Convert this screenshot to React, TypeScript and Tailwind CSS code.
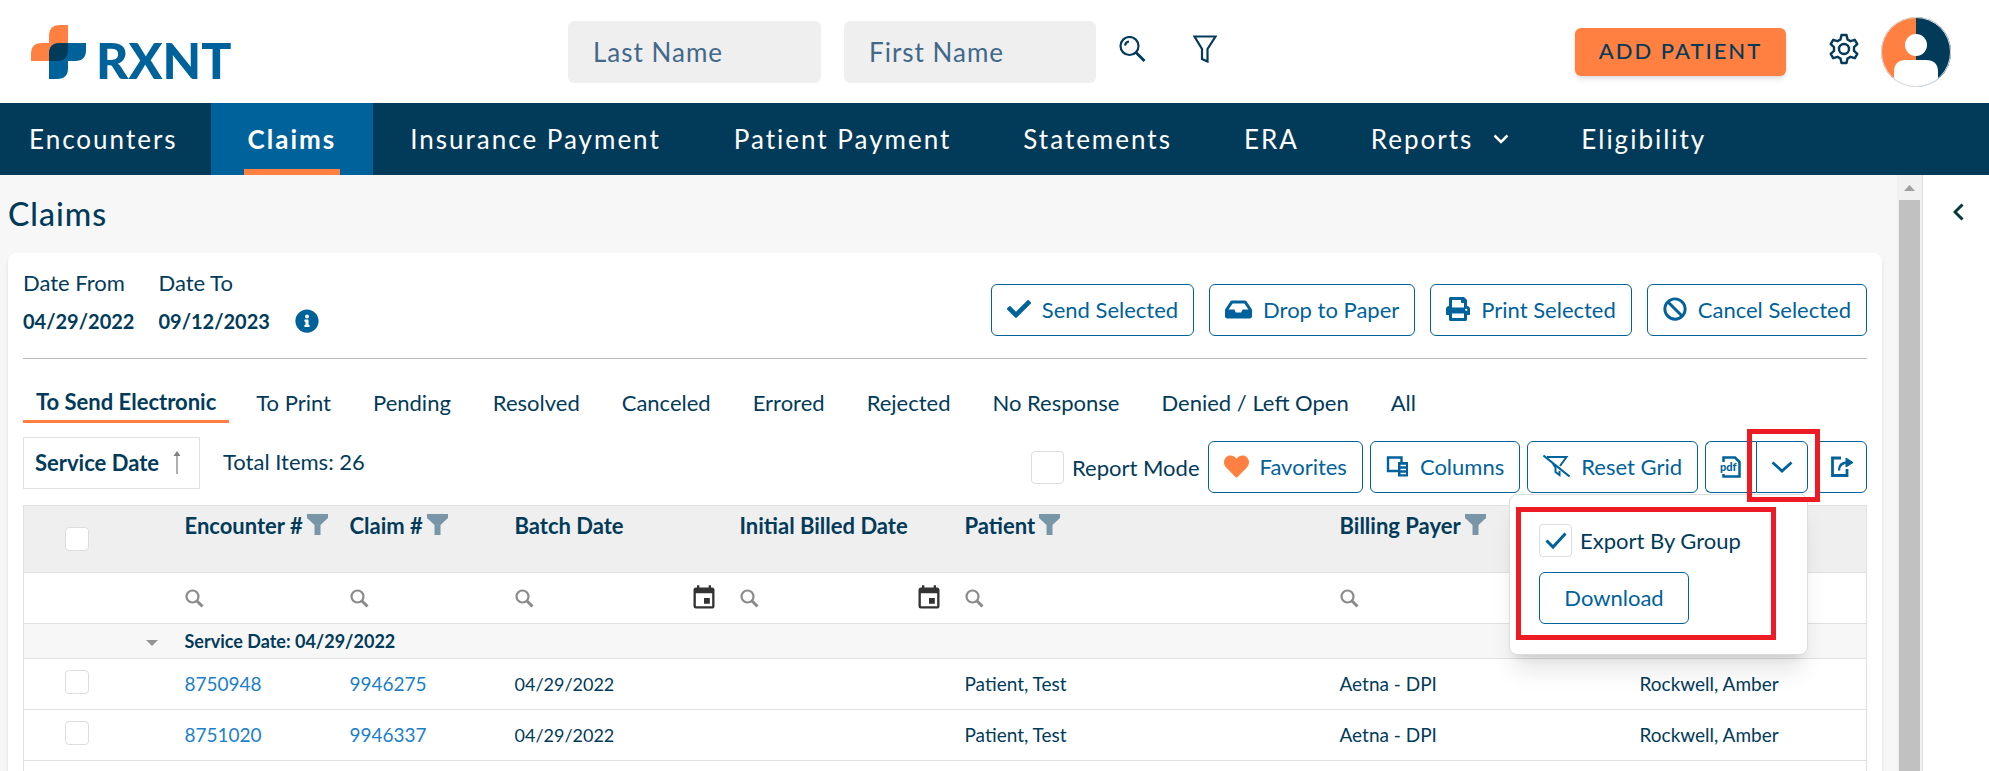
import type { ReactNode } from "react"
import { FaCheck, FaInbox, FaPrint, FaBan, FaHeart, FaInfoCircle } from "react-icons/fa"
import { MdEvent } from "react-icons/md"

type Claim = {
  encounter: string
  claim: string
  batchDate: string
  patient: string
  payer: string
  provider: string
}

const NAV = [
  "Encounters",
  "Claims",
  "Insurance Payment",
  "Patient Payment",
  "Statements",
  "ERA",
  "Reports",
  "Eligibility",
]

const TABS = [
  "To Send Electronic",
  "To Print",
  "Pending",
  "Resolved",
  "Canceled",
  "Errored",
  "Rejected",
  "No Response",
  "Denied / Left Open",
  "All",
]

const COLUMNS = [
  { label: "Encounter #", filter: true, date: false },
  { label: "Claim #", filter: true, date: false },
  { label: "Batch Date", filter: false, date: true },
  { label: "Initial Billed Date", filter: false, date: true },
  { label: "Patient", filter: true, date: false },
  { label: "Billing Payer", filter: true, date: false },
]

const CLAIMS: Claim[] = [
  {
    encounter: "8750948",
    claim: "9946275",
    batchDate: "04/29/2022",
    patient: "Patient, Test",
    payer: "Aetna - DPI",
    provider: "Rockwell, Amber",
  },
  {
    encounter: "8751020",
    claim: "9946337",
    batchDate: "04/29/2022",
    patient: "Patient, Test",
    payer: "Aetna - DPI",
    provider: "Rockwell, Amber",
  },
]

function Logo() {
  return (
    <a href="#home" aria-label="RXNT" className="flex items-end gap-[10px] text-[#00629b]">
      <svg width="55" height="54" viewBox="0 0 55 54">
        <path d="M18 18V11Q18 0 29 0H37V36H0V29Q0 18 11 18Z" fill="#ff8040" />
        <path d="M18 54V29Q18 18 29 18H55V25Q55 36 44 36H37V43Q37 54 26 54Z" fill="#00629b" />
        <path d="M18 36V29Q18 18 29 18H37V25Q37 36 26 36Z" fill="#023b5a" />
      </svg>
      <span className="text-[50px] leading-[38px] font-black">RXNT</span>
    </a>
  )
}

function Avatar() {
  return (
    <svg width="70" height="70" viewBox="0 0 70 70">
      <clipPath id="avatar">
        <circle cx="35" cy="35" r="35" />
      </clipPath>
      <g clipPath="url(#avatar)">
        <path d="M0 0H35V70H0Z" fill="#ff8040" />
        <path d="M35 0H70V70H35Z" fill="#023b5a" />
        <circle cx="35" cy="28" r="11" fill="#fff" />
        <path d="M13 70V55Q13 43 25 43H45Q57 43 57 55V70Z" fill="#fff" />
      </g>
      <circle cx="35" cy="35" r="34.5" fill="none" stroke="#d5dce1" strokeWidth="1" />
    </svg>
  )
}

function Gear() {
  return (
    <svg width="30" height="32" viewBox="0 0 30 32" fill="none" stroke="#023b5a" strokeWidth="2.4" strokeLinejoin="round">
      <path d="M12.5 2h5l1 4.4 3 1.8 4.3-1.4 2.5 4.3-3.3 3v3.8l3.3 3-2.5 4.3-4.3-1.4-3 1.8-1 4.4h-5l-1-4.4-3-1.8-4.3 1.4-2.5-4.3 3.3-3v-3.8l-3.3-3 2.5-4.3 4.3 1.4 3-1.8z" />
      <circle cx="15" cy="16" r="5" />
    </svg>
  )
}

function SearchGlass() {
  return (
    <svg width="27" height="27" viewBox="0 0 27 27" fill="none" stroke="#023b5a" strokeWidth="2.2">
      <circle cx="10.5" cy="10" r="9" />
      <path d="M6 9.5Q6.5 6 10 5.5" />
      <path d="M17 16.5L25.5 25" strokeWidth="2.8" />
    </svg>
  )
}

function FunnelOutline() {
  return (
    <svg width="24" height="28" viewBox="0 0 24 28" fill="none" stroke="#023b5a" strokeWidth="2.2">
      <path d="M1.5 1.5H22.5L14.5 14V26.5L9 24V14Z" />
    </svg>
  )
}

function HeaderFunnel() {
  return (
    <svg width="21" height="21" viewBox="0 0 21 21" fill="#7896a8">
      <path d="M0 0H21V4L13.5 11V21H7.5V11L0 4Z" />
    </svg>
  )
}

function CellSearch() {
  return (
    <svg width="19" height="19" viewBox="0 0 19 19" fill="none" stroke="#8a8a8a">
      <circle cx="7.5" cy="7.5" r="6" strokeWidth="2.2" />
      <path d="M11.5 11.5L17.5 17.5" strokeWidth="3" />
    </svg>
  )
}

function ColumnsIcon() {
  return (
    <svg width="23" height="21" viewBox="0 0 23 21" fill="none" stroke="#00629b">
      <path d="M12 15H2V1.5H15.5V7" strokeWidth="2.4" />
      <path d="M12 6H22V20.5H12Z" fill="#00629b" stroke="none" />
      <path d="M14.5 9.5H20M14.5 13.5H20M14.5 17.5H20" stroke="#fff" strokeWidth="1.5" />
    </svg>
  )
}

function ResetIcon() {
  return (
    <svg width="27" height="22" viewBox="0 0 27 22" fill="none" stroke="#00629b" strokeWidth="2">
      <path d="M4 2H23.5L17 11M10 9L12.5 12.5V17L16.5 20V16" />
      <path d="M0.5 0.5L26.5 21.5" />
    </svg>
  )
}

function PdfIcon() {
  return (
    <svg width="22" height="23" viewBox="0 0 22 23">
      <path d="M3.5 6V1.5H15L19.5 6V20.5H3.5V18" fill="none" stroke="#00629b" strokeWidth="2.5" />
      <path d="M0 6H17V17.5H0Z" fill="#fff" />
      <text x="0" y="15" fontSize="11" fontWeight="900" fill="#00629b">pdf</text>
    </svg>
  )
}

function ExportIcon() {
  return (
    <svg width="23" height="22" viewBox="0 0 23 22" fill="none" stroke="#00629b">
      <path d="M11 2H2.5V19.5H17V13" strokeWidth="2.8" />
      <path d="M9 14.5Q9 6.5 18 6.5" strokeWidth="2.4" />
      <path d="M16 2L23 6.5L16 11Z" fill="#00629b" />
    </svg>
  )
}

function Chevron() {
  return (
    <svg width="22" height="12" viewBox="0 0 22 12" fill="none" stroke="#00629b" strokeWidth="2.8">
      <path d="M1.5 1.5L11 10L20.5 1.5" />
    </svg>
  )
}

function ActionButton({ icon, children }: { icon?: ReactNode; children: ReactNode }) {
  return (
    <button className="flex h-[52px] items-center gap-[11px] rounded-md border border-[#00629b] bg-white px-[15px] pb-0.5 whitespace-nowrap text-[#00629b]">
      {icon}
      {children}
    </button>
  )
}

function RowCheckbox({ label }: { label: string }) {
  return (
    <input
      type="checkbox"
      aria-label={label}
      className="block size-6 appearance-none rounded-sm border border-[#dddddd] bg-white"
    />
  )
}

function Header() {
  return (
    <header className="flex h-[103px] items-start">
      <div className="w-[568px] shrink-0 pt-[25px] pl-[31px]">
        <Logo />
      </div>
      <div className="flex gap-[23px] pt-[21px]">
        <input
          aria-label="Last Name"
          placeholder="Last Name"
          className="h-[62px] w-[253px] rounded-md bg-[#efefef] px-[25px] text-[26px] tracking-[1px] placeholder:text-[#42698a]"
        />
        <input
          aria-label="First Name"
          placeholder="First Name"
          className="h-[62px] w-[252px] rounded-md bg-[#efefef] px-[25px] text-[26px] tracking-[1px] placeholder:text-[#42698a]"
        />
      </div>
      <button aria-label="Search" className="mt-9 ml-[23px]">
        <SearchGlass />
      </button>
      <button aria-label="Filter" className="mt-[35px] ml-[47px]">
        <FunnelOutline />
      </button>
      <div className="ml-auto flex pr-[38px]">
        <button className="mt-7 h-12 w-[211px] rounded-md bg-[#ff8040] pb-1 text-[22px] font-medium tracking-[2px] shadow-md">
          ADD PATIENT
        </button>
        <button aria-label="Settings" className="mt-[33px] ml-[43px] self-start">
          <Gear />
        </button>
        <button aria-label="Account" className="mt-[17px] ml-[22px] self-start">
          <Avatar />
        </button>
      </div>
    </header>
  )
}

function Nav() {
  return (
    <nav className="flex h-[72px] bg-[#023b5a] pr-9 text-[26px] tracking-[2px] text-white">
      {NAV.map((item) => (
        <a
          key={item}
          href="#nav"
          className={`flex items-center gap-5 whitespace-nowrap ${
            item === "Claims"
              ? "relative bg-[#00629b] px-[37px] font-bold"
              : item === "Encounters"
                ? "pr-[33px] pl-[29px]"
                : item === "Insurance Payment"
                  ? "px-[37px]"
                  : "px-9"
          }`}
        >
          {item}
          {item === "Reports" && (
            <svg width="16" height="10" viewBox="0 0 16 10" fill="none" stroke="#fff" strokeWidth="2.5">
              <path d="M1.5 1.5L8 8L14.5 1.5" />
            </svg>
          )}
          {item === "Claims" && (
            <span className="absolute bottom-0 left-[33px] right-[33px] h-1.5 bg-[#ff8040]" />
          )}
        </a>
      ))}
    </nav>
  )
}

function ExportMenu() {
  return (
    <div className="absolute top-[53px] right-0 z-10 h-[161px] w-[299px] rounded-lg border border-[#dddddd] bg-white pt-[29px] pl-[29px] shadow-xl">
      <label className="flex items-center gap-2">
        <span className="relative flex">
          <input
            type="checkbox"
            defaultChecked
            className="size-[33px] appearance-none rounded-sm border border-[#dddddd] bg-white"
          />
          <svg className="absolute top-2 left-1.5" width="22" height="18" viewBox="0 0 22 18" fill="none" stroke="#00629b" strokeWidth="3">
            <path d="M1.5 8.5L8 15L20.5 1.5" />
          </svg>
        </span>
        Export By Group
      </label>
      <button className="mt-[15px] h-[52px] w-[150px] rounded-md border border-[#00629b] pb-0.5 text-[#00629b]">
        Download
      </button>
      {/* callout around the export options */}
      <div className="pointer-events-none absolute top-3 left-1.5 h-[133px] w-[260px] border-[5px] border-[#ed1c24]" />
    </div>
  )
}

function Toolbar() {
  return (
    <div className="mt-[14px] flex items-start">
      <div className="flex h-[52px] w-[177px] items-center gap-[14px] border border-[#e0e0e0] pb-0.5 pl-[11px] font-bold whitespace-nowrap">
        Service Date
        <svg width="8" height="23" viewBox="0 0 8 23">
          <path d="M4 3V23" stroke="#959595" strokeWidth="1.5" />
          <path d="M0.5 5L4 0L7.5 5Z" fill="#808080" />
        </svg>
      </div>
      <p className="ml-[23px] leading-[50px]">Total Items: 26</p>
      <div className="mt-1 ml-auto flex items-center">
        <label className="flex items-center gap-2 whitespace-nowrap">
          <input
            type="checkbox"
            className="size-[33px] appearance-none rounded-sm border border-[#dddddd] bg-white"
          />
          Report Mode
        </label>
        <div className="ml-2 flex gap-[7px]">
          <ActionButton icon={<FaHeart size={25} color="#ff8040" />}>Favorites</ActionButton>
          <ActionButton icon={<ColumnsIcon />}>Columns</ActionButton>
          <ActionButton icon={<ResetIcon />}>Reset Grid</ActionButton>
          <div className="relative flex">
            <button aria-label="Export PDF" className="flex h-[52px] w-[51px] items-center justify-center rounded-l-md border border-r-0 border-[#00629b]">
              <PdfIcon />
            </button>
            <button aria-label="Export options" className="flex h-[52px] w-[52px] items-center justify-center rounded-r-md border border-[#00629b]">
              <Chevron />
            </button>
            <ExportMenu />
            <div className="pointer-events-none absolute -top-3 -right-3 z-20 h-[73px] w-[73px] border-[5px] border-[#ed1c24]" />
          </div>
          <button aria-label="Share" className="flex h-[52px] w-[52px] items-center justify-center rounded-md border border-[#00629b]">
            <ExportIcon />
          </button>
        </div>
      </div>
    </div>
  )
}

function ClaimsTable() {
  return (
    <table className="mt-3 w-full table-fixed border-collapse border border-[#e0e0e0] text-left text-[19px]">
      <colgroup>
        <col className="w-[108px]" />
        <col className="w-[43px]" />
        <col className="w-[165px]" />
        <col className="w-[165px]" />
        <col className="w-[225px]" />
        <col className="w-[225px]" />
        <col className="w-[375px]" />
        <col className="w-[300px]" />
        <col />
      </colgroup>
      <thead>
        <tr className="h-[67px] border-b border-[#e0e0e0] bg-[#efefef] align-top text-[22px]">
          <td className="pt-[21px] pl-[41px]">
            <RowCheckbox label="Select all" />
          </td>
          <td />
          {COLUMNS.map((col) => (
            <th key={col.label} className="pt-2 pl-[10px] font-bold whitespace-nowrap">
              <span className="flex gap-1 leading-6">
                {col.label}
                {col.filter && <HeaderFunnel />}
              </span>
            </th>
          ))}
          <td />
        </tr>
        <tr className="h-[51px] border-b border-[#e0e0e0]">
          <td />
          <td />
          {COLUMNS.map((col) => (
            <td key={col.label} className="pr-3 pl-[10px]">
              <span className="flex items-center justify-between">
                <CellSearch />
                {col.date && <MdEvent size={28} color="#333333" />}
              </span>
            </td>
          ))}
          <td />
        </tr>
      </thead>
      <tbody>
        <tr className="h-[35px] border-b border-[#e0e0e0] bg-[#f7f7f7]">
          <td />
          <td className="pt-1 pl-[14px]">
            <svg width="12" height="6" viewBox="0 0 12 6" fill="#959595">
              <path d="M0 0H12L6 6Z" />
            </svg>
          </td>
          <td colSpan={7} className="pl-[10px] text-lg font-bold">
            Service Date: 04/29/2022
          </td>
        </tr>
        {CLAIMS.map((c) => (
          <tr key={c.claim} className="h-[51px] border-b border-[#e0e0e0]">
            <td className="pb-1 pl-[41px]">
              <RowCheckbox label={`Select claim ${c.claim}`} />
            </td>
            <td />
            <td className="pl-[10px]">
              <a href="#encounter" className="text-[#1b7fc9]">{c.encounter}</a>
            </td>
            <td className="pl-[10px]">
              <a href="#claim" className="text-[#1b7fc9]">{c.claim}</a>
            </td>
            <td className="pl-[10px] text-lg">{c.batchDate}</td>
            <td />
            <td className="pl-[10px]">{c.patient}</td>
            <td className="pl-[10px]">{c.payer}</td>
            <td className="pl-[10px]">{c.provider}</td>
          </tr>
        ))}
        <tr className="h-[51px]">
          <td colSpan={9} />
        </tr>
      </tbody>
    </table>
  )
}

export default function App() {
  return (
    <div className="flex h-screen flex-col overflow-hidden bg-white font-['Lato','Open_Sans',sans-serif] text-[22px] text-[#023b5a]">
      <Header />
      <Nav />
      <div className="flex min-h-0 flex-1">
        <main className="min-w-0 flex-1 overflow-hidden bg-[#f7f7f7] pr-[15px] pl-2">
          <h1 className="pt-5 text-[32px] leading-[38px] font-medium tracking-[1px]">Claims</h1>
          <section className="mt-5 rounded-lg bg-white px-[15px] pt-[15px] shadow-md">
            <div className="flex h-[91px] items-start justify-between border-b border-[#bdbdbd]">
              <dl className="flex gap-6">
                <div>
                  <dt className="leading-[30px]">Date From</dt>
                  <dd className="text-xl leading-[46px] font-bold">04/29/2022</dd>
                </div>
                <div>
                  <dt className="leading-[30px]">Date To</dt>
                  <dd className="flex items-center gap-[25px] text-xl leading-[46px] font-bold">
                    09/12/2023
                    <FaInfoCircle size={24} color="#00629b" />
                  </dd>
                </div>
              </dl>
              <div className="flex gap-[15px] pt-4">
                <ActionButton icon={<FaCheck size={24} />}>Send Selected</ActionButton>
                <ActionButton icon={<FaInbox size={27} />}>Drop to Paper</ActionButton>
                <ActionButton icon={<FaPrint size={24} />}>Print Selected</ActionButton>
                <ActionButton icon={<FaBan size={24} />}>Cancel Selected</ActionButton>
              </div>
            </div>
            <div role="tablist" className="mt-6 flex h-10">
              {TABS.map((tab, i) => (
                <button
                  key={tab}
                  role="tab"
                  aria-selected={i === 0}
                  className={
                    i === 0
                      ? "mr-[6px] border-b-[3px] border-[#ff8040] px-[13px] font-bold whitespace-nowrap"
                      : "px-[21px] pb-0.5 whitespace-nowrap"
                  }
                >
                  {tab}
                </button>
              ))}
            </div>
            <Toolbar />
            <ClaimsTable />
          </section>
        </main>
        <div className="w-[26px] border-r border-[#dddddd] bg-[#f1f1f1]">
          <svg width="25" height="25" viewBox="0 0 25 25" fill="#a0a0a0">
            <path d="M7 16H18L12.5 10Z" />
          </svg>
          <div className="mx-0.5 h-full bg-[#c1c1c1]" />
        </div>
        <aside className="w-[66px] bg-white pt-7 pl-[30px]">
          <button aria-label="Expand panel" className="block">
            <svg width="11" height="18" viewBox="0 0 11 18" fill="none" stroke="#033b35" strokeWidth="3">
              <path d="M9.5 1.5L2 9L9.5 16.5" />
            </svg>
          </button>
        </aside>
      </div>
    </div>
  )
}
